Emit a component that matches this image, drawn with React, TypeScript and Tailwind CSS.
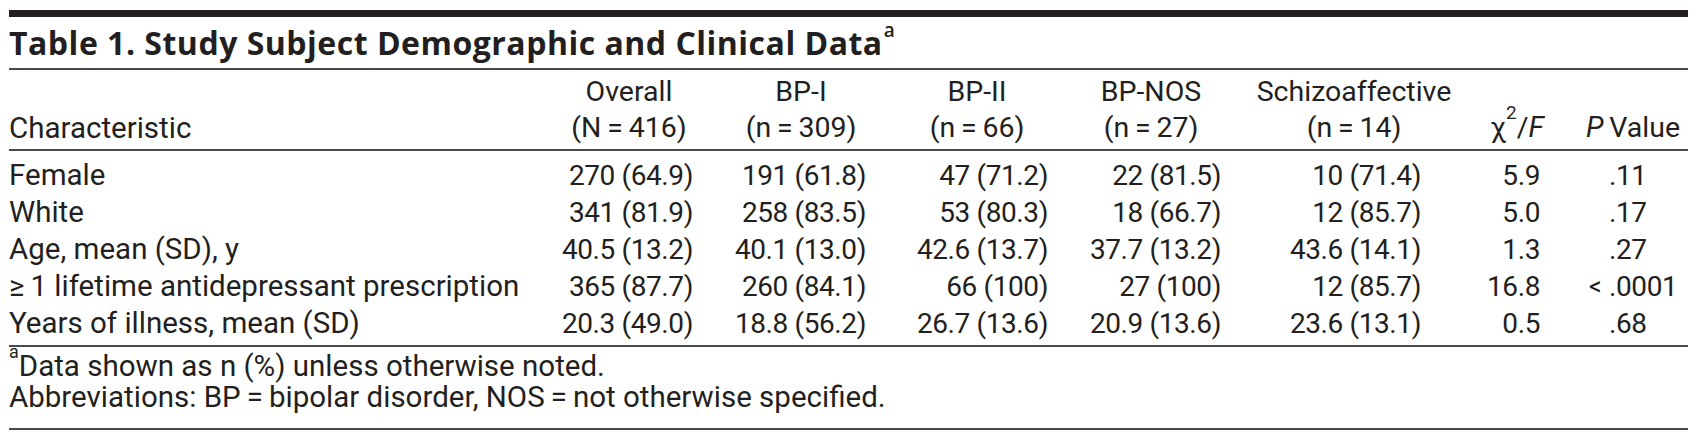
import React from 'react';

const ROWS: { label: string; cells: string[]; chi: string; p: string; lt?: boolean }[] = [
  { label: 'Female', cells: ['270 (64.9)', '191 (61.8)', '47 (71.2)', '22 (81.5)', '10 (71.4)'], chi: '5.9', p: '.11' },
  { label: 'White', cells: ['341 (81.9)', '258 (83.5)', '53 (80.3)', '18 (66.7)', '12 (85.7)'], chi: '5.0', p: '.17' },
  { label: 'Age, mean (SD), y', cells: ['40.5 (13.2)', '40.1 (13.0)', '42.6 (13.7)', '37.7 (13.2)', '43.6 (14.1)'], chi: '1.3', p: '.27' },
  {
    label: '\u2265\u20091 lifetime antidepressant prescription',
    cells: ['365 (87.7)', '260 (84.1)', '66 (100)', '27 (100)', '12 (85.7)'],
    chi: '16.8',
    p: '.0001',
    lt: true,
  },
  { label: 'Years of illness, mean (SD)', cells: ['20.3 (49.0)', '18.8 (56.2)', '26.7 (13.6)', '20.9 (13.6)', '23.6 (13.1)'], chi: '0.5', p: '.68' },
];

// right padding per group column so the numbers line up under the headers
const PAD = ['pr-[5px]', 'pr-[38px]', 'pr-[2px]', 'pr-[31px]', 'pr-[35px]'];

const GROUPS = [
  ['Overall', '(N\u2009=\u2009416)'],
  ['BP-I', '(n\u2009=\u2009309)'],
  ['BP-II', '(n\u2009=\u200966)'],
  ['BP-NOS', '(n\u2009=\u200927)'],
  ['Schizoaffective', '(n\u2009=\u200914)'],
];

const GRID = 'grid grid-cols-[551px_138px_206px_146px_202px_204px_122px_110px]';

export default function App() {
  return (
    <div className="w-[1697px] h-[442px] overflow-hidden bg-white px-[9px] pt-[10px] text-[#231f20] font-['Roboto','Liberation_Sans',sans-serif] text-[29.5px] leading-[37px]">
      <div className="h-[7px] bg-[#231f20]" />

      {/* title */}
      <div className="pt-[8px] pb-[7px] leading-[36px] text-[32px] font-bold tracking-[0.5px] font-['Open_Sans',sans-serif] whitespace-nowrap">
        Table 1. Study Subject Demographic and Clinical Data
        <sup className="text-[19px] font-semibold tracking-normal align-[9px] ml-[1px]">a</sup>
      </div>
      <div className="h-[2px] bg-[#4a4a4a]" />

      {/* header */}
      <div className={`${GRID} pt-[4px] pb-[3px] leading-[36px]`}>
        <div className="flex flex-col justify-end">Characteristic</div>
        {GROUPS.map(([a, b]) => (
          <div key={a} className="flex flex-col items-center whitespace-nowrap text-[28.5px]">
            <span>{a}</span>
            <span>{b}</span>
          </div>
        ))}
        <div className="flex flex-col justify-end items-center text-[28.5px]">
          <span>
            {'\u03c7'}
            <sup className="text-[19px] align-[9px]">2</sup>/<i>F</i>
          </span>
        </div>
        <div className="flex flex-col justify-end items-center text-[28.5px]">
          <span>
            <i>P</i>
            {'\u2009'}Value
          </span>
        </div>
      </div>
      <div className="h-[2px] bg-[#4a4a4a]" />

      {/* body */}
      <div className="pt-[6px] pb-[3px]">
        {ROWS.map((r) => (
          <div key={r.label} className={GRID}>
            <div className="whitespace-nowrap">{r.label}</div>
            {r.cells.map((c, i) => (
              <div key={i} className={`flex justify-end whitespace-nowrap text-[28px] tracking-[-0.4px] ${PAD[i]}`}>
                {c}
              </div>
            ))}
            <div className="flex justify-end pr-[38px] text-[28px] tracking-[-0.4px]">{r.chi}</div>
            <div className="flex pl-[11px] text-[28px] tracking-[-0.4px]">
              <span className="w-[20px] text-[25px]">{r.lt ? '<' : ''}</span>
              <span>{r.p}</span>
            </div>
          </div>
        ))}
      </div>
      <div className="h-[2px] bg-[#4a4a4a]" />

      {/* footnotes */}
      <div className="pt-[4px] pb-[15px] leading-[31px] whitespace-nowrap">
        <div>
          <sup className="text-[18px] align-[9px]">a</sup>Data shown as n (%) unless otherwise noted.
        </div>
        <div>Abbreviations: BP{'\u2009=\u2009'}bipolar disorder, NOS{'\u2009=\u2009'}not otherwise specified.</div>
      </div>
      <div className="h-[2px] bg-[#4a4a4a]" />
    </div>
  );
}
